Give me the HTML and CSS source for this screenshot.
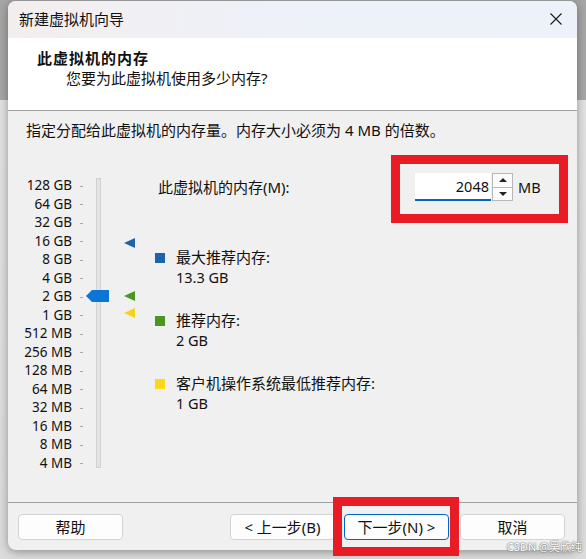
FILE: index.html
```html
<!DOCTYPE html>
<html>
    <head>
        <title>新建虚拟机向导</title>
        <link rel="stylesheet" href="styles.css">
    </head>
    <body>
        <div class="screen">
            <div class="window">
                <div class="titlebar">
                    <span class="caption">新建虚拟机向导</span>
                    <svg class="close" width="12" height="12" viewBox="0 0 12 12">
                        <path d="M0.5 0.5 L11.5 11.5 M11.5 0.5 L0.5 11.5" stroke="#1b1b1b" stroke-width="1.1" fill="none"/>
                    </svg>
                </div>
                <div class="header">
                    <div class="h-title">此虚拟机的内存</div>
                    <div class="h-sub">您要为此虚拟机使用多少内存?</div>
                </div>
                <div class="content">
                    <div class="hint">指定分配给此虚拟机的内存量。内存大小必须为 4 MB 的倍数。</div>
                    <div class="main">
                        <div class="slider">
                            <div class="scale">
                                <div class="mark">128 GB</div>
                                <div class="mark">64 GB</div>
                                <div class="mark">32 GB</div>
                                <div class="mark">16 GB</div>
                                <div class="mark">8 GB</div>
                                <div class="mark">4 GB</div>
                                <div class="mark">2 GB</div>
                                <div class="mark">1 GB</div>
                                <div class="mark">512 MB</div>
                                <div class="mark">256 MB</div>
                                <div class="mark">128 MB</div>
                                <div class="mark">64 MB</div>
                                <div class="mark">32 MB</div>
                                <div class="mark">16 MB</div>
                                <div class="mark">8 MB</div>
                                <div class="mark">4 MB</div>
                            </div>
                            <div class="track"></div>
                            <!-- thumb and markers sit at their value on the scale -->
                            <svg class="thumb" width="23" height="12" viewBox="0 0 23 12">
                                <polygon points="0,6 6,0 23,0 23,12 6,12" fill="#0b76d6"/>
                            </svg>
                            <svg class="pin pin-max" width="11" height="10" viewBox="0 0 11 10">
                                <polygon points="0,5 11,0 11,10" fill="#1c64ac"/>
                            </svg>
                            <svg class="pin pin-rec" width="11" height="10" viewBox="0 0 11 10">
                                <polygon points="0,5 11,0 11,10" fill="#4b961f"/>
                            </svg>
                            <svg class="pin pin-min" width="11" height="10" viewBox="0 0 11 10">
                                <polygon points="0,5 11,0 11,10" fill="#f6d21c"/>
                            </svg>
                        </div>
                        <div class="panel">
                            <div class="mem-row">
                                <span class="mem-label">此虚拟机的内存(M):</span>
                                <div class="mem-input">2048</div>
                                <div class="spin">
                                    <div class="spin-btn"><span class="arrow up"></span></div>
                                    <div class="spin-btn"><span class="arrow down"></span></div>
                                </div>
                                <span class="unit">MB</span>
                            </div>
                            <div class="legend">
                                <div class="legend-name"><span class="swatch blue"></span>最大推荐内存:</div>
                                <div class="legend-value">13.3 GB</div>
                            </div>
                            <div class="legend">
                                <div class="legend-name"><span class="swatch green"></span>推荐内存:</div>
                                <div class="legend-value">2 GB</div>
                            </div>
                            <div class="legend">
                                <div class="legend-name"><span class="swatch yellow"></span>客户机操作系统最低推荐内存:</div>
                                <div class="legend-value">1 GB</div>
                            </div>
                        </div>
                    </div>
                </div>
                <div class="footer">
                    <div class="btn help">帮助</div>
                    <div class="btn back">&lt; 上一步(B)</div>
                    <div class="btn next">下一步(N) &gt;</div>
                    <div class="btn cancel">取消</div>
                </div>
            </div>
            <div class="note note-mem"></div>
            <div class="note note-next"></div>
            <div class="watermark">CSDN @吴欣纯</div>
        </div>
    </body>
</html>
```

FILE: styles.css
```css
body {
    margin: 0;
    font-family: "Noto Sans", "Noto Sans CJK SC", sans-serif;
    font-size: 15px;
    color: #111;
}
.screen {
    position: relative;
    width: 586px;
    height: 559px;
    overflow: hidden;
    background: linear-gradient(#a6a6a6 0, #a6a6a6 100px, #e2e2e2 100px, #dcdcdc 100%);
    padding-top: 1px;
    box-sizing: border-box;
}
.window {
    margin-left: 8px;
    width: 569px;
    height: 549px;
    border-radius: 8px;
    overflow: hidden;
    display: flex;
    flex-direction: column;
    background: #f0f0f0;
    box-shadow: 0 2px 10px rgba(0, 0, 0, 0.35);
}
.titlebar {
    height: 37px;
    flex: none;
    display: flex;
    align-items: center;
    justify-content: space-between;
    padding: 0 15px 0 11px;
    background: linear-gradient(to right, #f3eeee, #eef1f8 45%, #edf1f9);
}
.caption {
    line-height: 20px;
    margin-top: -1px;
}
.close {
    display: block;
    margin-top: -1px;
}
.header {
    height: 62px;
    flex: none;
    background: #fff;
    border-bottom: 1px solid #a0a0a0;
    padding-top: 10px;
}
.h-title {
    font-weight: bold;
    line-height: 20px;
    margin-left: 29px;
    letter-spacing: 1px;
}
.h-sub {
    line-height: 20px;
    margin-left: 58px;
}
.content {
    flex: 1;
    min-height: 0;
}
.hint {
    line-height: 20px;
    margin: 9px 0 0 18px;
}
.main {
    display: flex;
    margin-top: 33px;
}
.slider {
    position: relative;
    display: flex;
    width: 150px;
    flex: none;
}
.scale {
    width: 75px;
    padding-top: 3px;
    font-size: 13.5px;
}
.mark {
    height: 18.5px;
    line-height: 18.5px;
    text-align: right;
    white-space: nowrap;
}
.mark::after {
    content: "";
    display: inline-block;
    width: 3px;
    height: 1px;
    margin-left: 8px;
    vertical-align: middle;
    background: #a8a8a8;
}
.track {
    width: 3px;
    height: 288px;
    margin: 5px 0 0 13px;
    background: #e4e4e4;
    border: 1px solid #d2d2d2;
}
.thumb, .pin {
    position: absolute;
    display: block;
}
.thumb {
    left: 78px;
    top: 117px;
}
.pin {
    left: 116px;
}
.pin-max {
    top: 65px;
}
.pin-rec {
    top: 118px;
}
.pin-min {
    top: 135px;
}
.panel {
    flex: 1;
}
.mem-row {
    display: flex;
    align-items: center;
    height: 28px;
}
.mem-label {
    width: 257px;
    line-height: 20px;
}
.mem-input {
    width: 74px;
    height: 26px;
    line-height: 26px;
    text-align: right;
    padding-right: 2px;
    background: #fff;
    border-bottom: 2px solid #0067c0;
    font-size: 14.5px;
}
.spin {
    width: 19px;
    height: 26px;
    margin-left: 1px;
    display: flex;
    flex-direction: column;
    border: 1px solid #b8b8b8;
    background: #fbfbfb;
}
.spin-btn {
    flex: 1;
    display: flex;
    align-items: center;
    justify-content: center;
}
.spin-btn + .spin-btn {
    border-top: 1px solid #b8b8b8;
}
.arrow {
    width: 0;
    height: 0;
    border-left: 4px solid transparent;
    border-right: 4px solid transparent;
}
.arrow.up {
    border-bottom: 4px solid #222;
}
.arrow.down {
    border-top: 4px solid #222;
}
.unit {
    margin-left: 5px;
    font-size: 14.5px;
}
.legend {
    margin: 23px 0 0 -3px;
    line-height: 20px;
}
.mem-row + .legend {
    margin-top: 46px;
}
.legend-name {
    display: flex;
    align-items: center;
}
.legend-value {
    padding-left: 21px;
    font-size: 14.5px;
}
.swatch {
    width: 10px;
    height: 10px;
    margin: 2px 11px 0 0;
}
.swatch.blue {
    background: #1c64ac;
}
.swatch.green {
    background: #4b961f;
}
.swatch.yellow {
    background: #fdd817;
}
.footer {
    flex: none;
    display: flex;
    border-top: 1px solid #a0a0a0;
    padding: 11px 12px 10px 10px;
}
.btn {
    height: 24px;
    line-height: 24px;
    width: 103px;
    text-align: center;
    background: #fdfdfd;
    border: 1px solid #d3d3d3;
    border-radius: 4px;
}
.help {
    margin-right: auto;
}
.next {
    margin-left: 9px;
    border-color: #0067c0;
}
.cancel {
    margin-left: 11px;
}
.note {
    position: absolute;
    border: 9px solid #e81c24;
    box-sizing: border-box;
}
.note-mem {
    left: 391px;
    top: 155px;
    width: 177px;
    height: 68px;
}
.note-next {
    left: 333px;
    top: 497px;
    width: 126px;
    height: 59px;
}
.watermark {
    position: absolute;
    right: 4px;
    bottom: 5px;
    font-size: 11px;
    line-height: 14px;
    color: #fff;
    text-shadow: 0 0 2px #666, 0 0 1px #666;
}
```
